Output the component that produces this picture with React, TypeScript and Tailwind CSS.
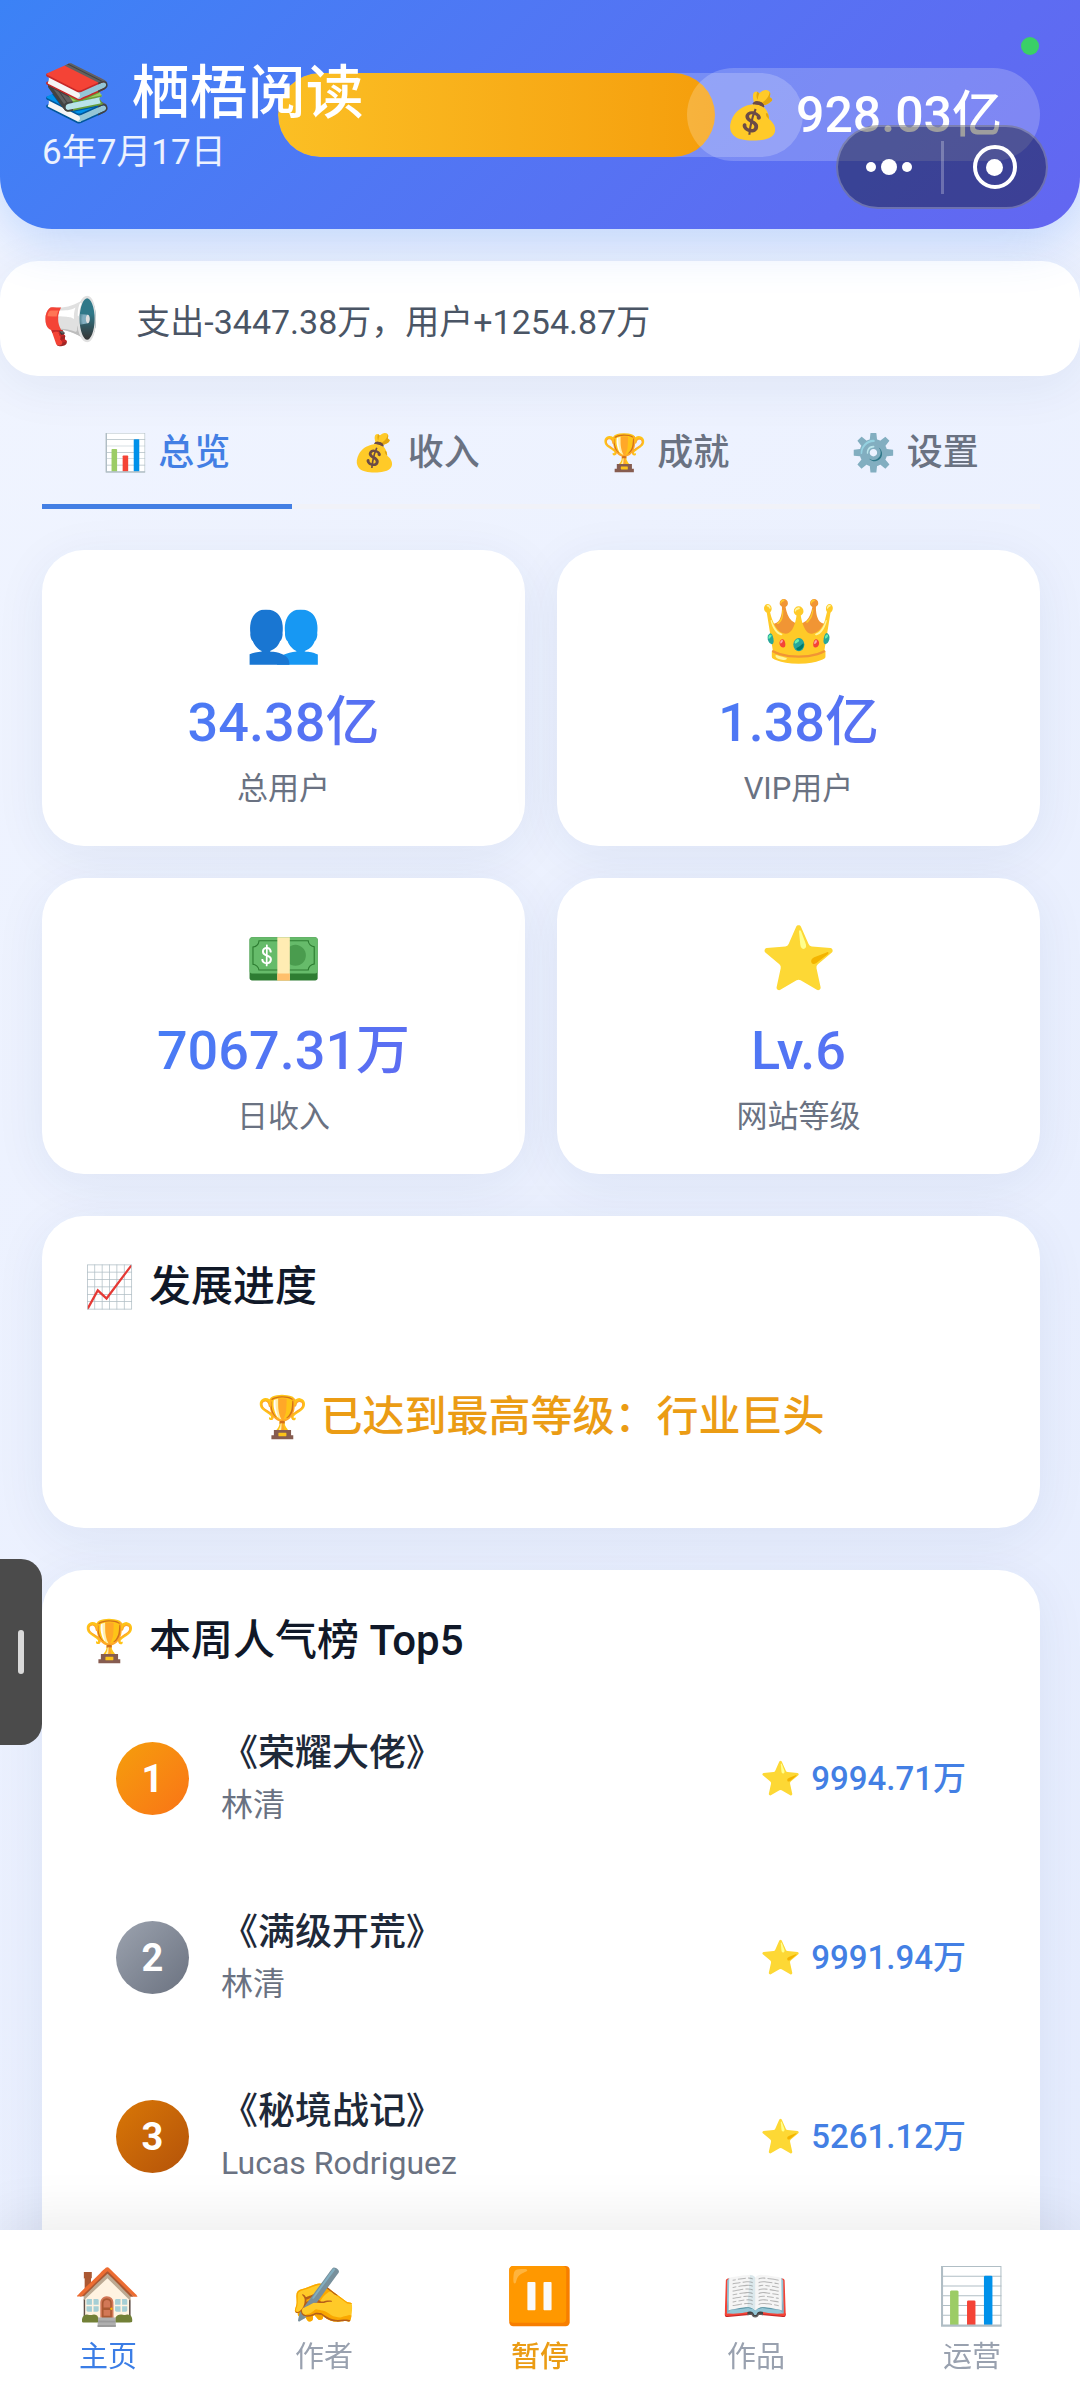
const CARD = "bg-white shadow-[0_10px_52px_rgba(30,50,120,0.07)]";
const NUMBER =
  "bg-linear-135 from-[#3b82f6] to-[#6366f1] bg-clip-text text-transparent";

const tabs = [
  { icon: "📊", label: "总览", active: true },
  { icon: "💰", label: "收入", active: false },
  { icon: "🏆", label: "成就", active: false },
  { icon: "⚙️", label: "设置", active: false },
];

const stats = [
  { icon: "👥", value: "34.38亿", label: "总用户" },
  { icon: "👑", value: "1.38亿", label: "VIP用户" },
  { icon: "💵", value: "7067.31万", label: "日收入" },
  { icon: "⭐", value: "Lv.6", label: "网站等级" },
];

const ranking = [
  { title: "《荣耀大佬》", author: "林清", score: "9994.71万", badge: "from-[#f59e0b] to-[#f97316]" },
  { title: "《满级开荒》", author: "林清", score: "9991.94万", badge: "from-[#9ca3af] to-[#6b7280]" },
  { title: "《秘境战记》", author: "Lucas Rodriguez", score: "5261.12万", badge: "from-[#d97706] to-[#b45309]" },
];

const nav = [
  { icon: "🏠", label: "主页", color: "text-[#3b7de6]" },
  { icon: "✍️", label: "作者", color: "text-gray-400" },
  { icon: "⏸️", label: "暂停", color: "text-[#eb9c14] font-medium" },
  { icon: "📖", label: "作品", color: "text-gray-400" },
  { icon: "📊", label: "运营", color: "text-gray-400" },
];

function Emoji({ children, className = "" }: { children: string; className?: string }) {
  return (
    <span
      aria-hidden="true"
      className={`shrink-0 leading-none font-['Noto_Color_Emoji'] ${className}`}
    >
      {children}
    </span>
  );
}

function Header() {
  return (
    <header className="relative flex h-[229px] items-center justify-between rounded-b-[52px] bg-linear-135 from-[#3b82f6] to-[#6366f1] pr-[40px] pl-[42px] text-white shadow-[0_10px_52px_rgba(59,130,246,0.28)]">
      <div className="absolute inset-x-0 top-[73px] flex justify-center">
        <div className="h-[84px] w-[525px] overflow-hidden rounded-full bg-white/20">
          <div className="h-full w-5/6 rounded-full bg-linear-90 from-[#fbbf24] to-[#f59e0b]" />
        </div>
      </div>
      <div className="relative pt-[8px]">
        <h1 className="flex items-center gap-[20px] text-[58px] leading-[68px] font-medium">
          <Emoji className="text-[56px]">📚</Emoji>
          栖梧阅读
        </h1>
        <p className="text-[35px] leading-[52px] text-white/90">6年7月17日</p>
      </div>
      <div className="relative flex h-[93px] items-center gap-[14px] rounded-full bg-white/20 px-[38px]">
        <Emoji className="text-[46px]">💰</Emoji>
        <span className="text-[50px] leading-none font-medium">928.03亿</span>
      </div>
      <span className="absolute top-[37px] right-[41px] size-[18px] rounded-full bg-[#3ad067]" />
      <div className="absolute top-[125px] right-[32px] flex h-[84px] w-[212px] items-center rounded-full border-2 border-white/25 bg-black/38">
        <button type="button" aria-label="更多" className="flex flex-1 items-center justify-center gap-[5px]">
          <span className="size-[10px] rounded-full bg-white" />
          <span className="size-[16px] rounded-full bg-white" />
          <span className="size-[10px] rounded-full bg-white" />
        </button>
        <span className="h-[53px] w-[3px] bg-white/25" />
        <button type="button" aria-label="关闭" className="flex flex-1 items-center justify-center">
          <span className="flex size-[44px] items-center justify-center rounded-full border-4 border-white">
            <span className="size-[17px] rounded-full bg-white" />
          </span>
        </button>
      </div>
    </header>
  );
}

export default function App() {
  return (
    <div className="relative flex min-h-screen flex-col bg-linear-135 from-[#f1f5ff] to-[#e5ecfe] font-['Roboto','Noto_Sans_CJK_SC',sans-serif] text-gray-800">
      <Header />

      <section className={`mt-[32px] flex items-center gap-[37px] rounded-[38px] px-[42px] pt-[35px] pb-[30px] ${CARD}`}>
        <Emoji className="text-[46px]">📢</Emoji>
        <p className="pt-[2px] text-[34px] leading-[48px] text-gray-600">支出-3447.38万，用户+1254.87万</p>
      </section>

      <main className="flex flex-1 flex-col pr-[40px] pl-[42px]">
        <nav className="mt-[32px] flex border-b-[5px] border-[#f1f2f8]">
          {tabs.map((tab) => (
            <button
              key={tab.label}
              type="button"
              className={`-mb-[5px] flex h-[101px] flex-1 items-center justify-center gap-[10px] border-b-[5px] pb-[6px] text-[36px] font-medium ${
                tab.active ? "border-[#437fe4] text-[#437fe4]" : "border-transparent text-gray-500"
              }`}
            >
              <Emoji className="text-[36px]">{tab.icon}</Emoji>
              {tab.label}
            </button>
          ))}
        </nav>

        <section className="mt-[41px] grid grid-cols-2 gap-[32px]">
          {stats.map((stat) => (
            <div key={stat.label} className={`flex h-[296px] flex-col items-center rounded-[42px] px-[32px] pt-[50px] ${CARD}`}>
              <Emoji className="text-[62px]">{stat.icon}</Emoji>
              <p className={`mt-[23px] self-stretch text-center text-[54px] leading-[76px] font-medium ${NUMBER}`}>
                {stat.value}
              </p>
              <p className="mt-[5px] text-[31px] leading-[46px] text-gray-500">{stat.label}</p>
            </div>
          ))}
        </section>

        <section className={`mt-[42px] h-[312px] rounded-[42px] px-[42px] pt-[42px] ${CARD}`}>
          <h2 className="flex items-center gap-[14px] text-[42px] leading-[58px] font-medium text-gray-900">
            <Emoji className="text-[41px]">📈</Emoji>
            发展进度
          </h2>
          <p className="mt-[72px] flex items-center justify-center gap-[12px] text-[42px] leading-[58px] font-medium text-[#eb9c14]">
            <Emoji className="text-[41px]">🏆</Emoji>
            已达到最高等级：行业巨头
          </p>
        </section>

        <section className={`mt-[42px] flex-1 rounded-[42px] px-[42px] pt-[42px] ${CARD}`}>
          <h2 className="flex items-center gap-[14px] text-[42px] leading-[58px] font-medium text-gray-900">
            <Emoji className="text-[41px]">🏆</Emoji>
            本周人气榜 Top5
          </h2>
          <ol className="mt-[19px]">
            {ranking.map((book, index) => (
              <li key={book.title} className="flex h-[179px] items-center gap-[32px] px-[32px]">
                <span
                  className={`flex size-[73px] items-center justify-center rounded-full bg-linear-135 text-[38px] leading-none font-bold text-white ${book.badge}`}
                >
                  {index + 1}
                </span>
                <div className="flex-1">
                  <p className="text-[37px] leading-[52px] font-medium">{book.title}</p>
                  <p className="text-[32px] leading-[50px] text-gray-500">{book.author}</p>
                </div>
                <p className="flex items-center gap-[10px] text-[33px] leading-none font-medium text-[#437fe4]">
                  <Emoji className="text-[33px]">⭐</Emoji>
                  {book.score}
                </p>
              </li>
            ))}
          </ol>
        </section>
      </main>

      <nav className="fixed inset-x-0 bottom-0 flex h-[170px] bg-white shadow-[0_-10px_52px_rgba(0,0,0,0.08)]">
        {nav.map((item) => (
          <button key={item.label} type="button" className={`flex flex-1 flex-col items-center pt-[39px] ${item.color}`}>
            <Emoji className="text-[55px]">{item.icon}</Emoji>
            <span className="mt-[13px] text-[29px] leading-[40px]">{item.label}</span>
          </button>
        ))}
      </nav>

      <button
        type="button"
        aria-label="展开侧栏"
        className="fixed top-[1559px] left-0 flex h-[186px] w-[42px] items-center justify-center rounded-r-[21px] bg-[#4b4b4b]"
      >
        <span className="h-[44px] w-[6px] rounded-full bg-[#d9d9d9]" />
      </button>
    </div>
  );
}
